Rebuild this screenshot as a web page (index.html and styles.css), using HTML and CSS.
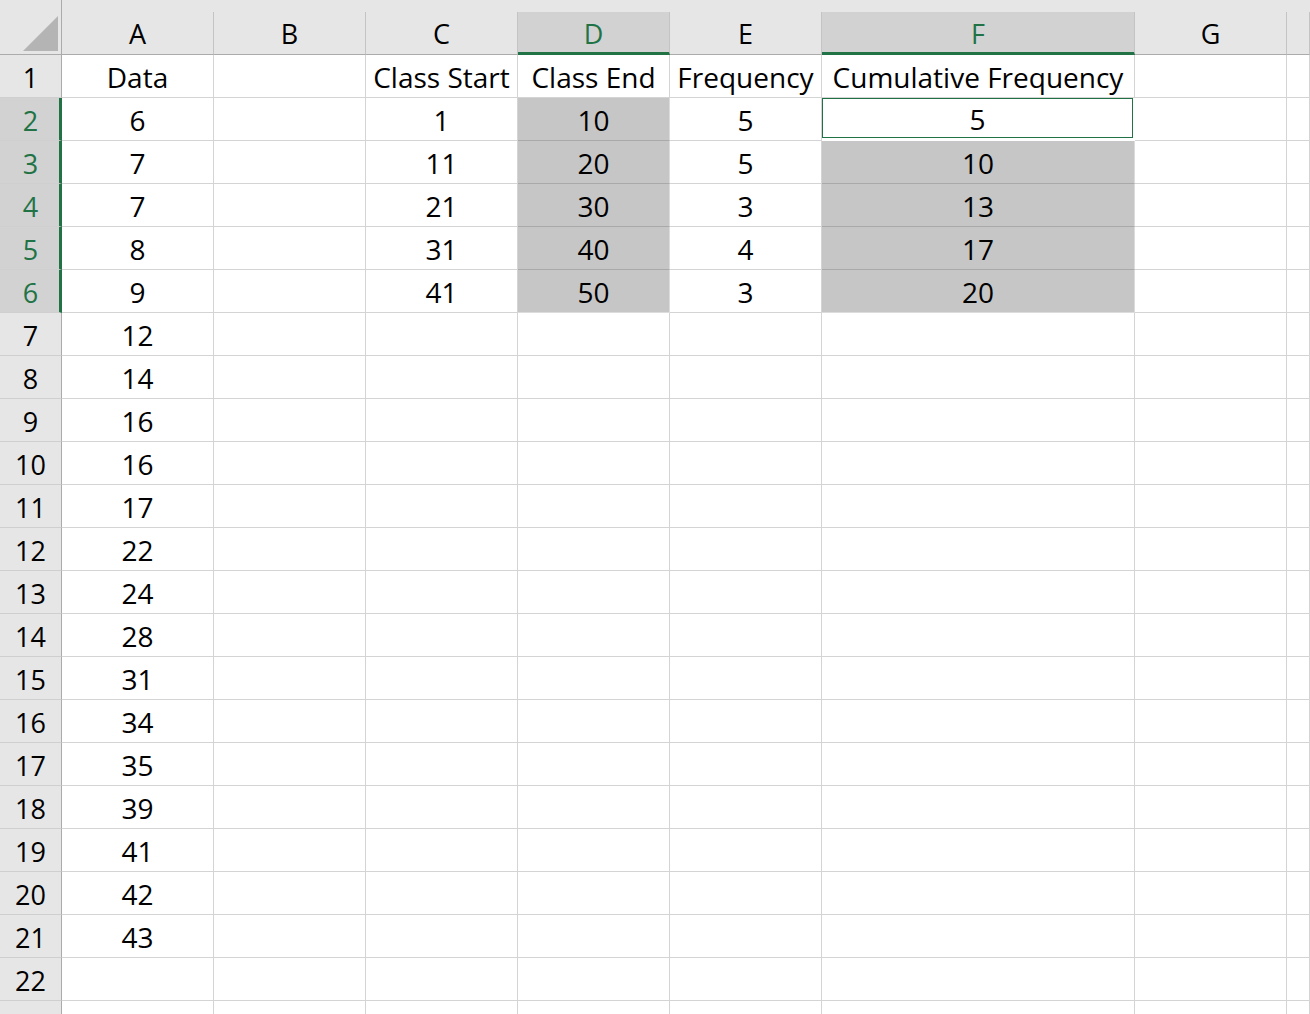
FILE: index.html
```html
<!DOCTYPE html>
<html lang="en">
<head>
    <meta charset="UTF-8">
    <meta name="viewport" content="width=device-width, initial-scale=1.0">
    <title>Cumulative Frequency</title>
    <link rel="stylesheet" href="styles.css">
</head>
<body>
    <div class="sheet">
        <div class="row head">
            <div class="corner"><span class="triangle"></span></div>
            <div class="col">A</div>
            <div class="col">B</div>
            <div class="col">C</div>
            <div class="col sel">D</div>
            <div class="col">E</div>
            <div class="col sel">F</div>
            <div class="col">G</div>
            <div class="col"></div>
        </div>
        <div id="rows"></div>
    </div>

    <script>
        const data = [6, 7, 7, 8, 9, 12, 14, 16, 16, 17, 22, 24, 28, 31, 34, 35, 39, 41, 42, 43];
        const tabela = [
            ["1", "10", "5", "5"],
            ["11", "20", "5", "10"],
            ["21", "30", "3", "13"],
            ["31", "40", "4", "17"],
            ["41", "50", "3", "20"]
        ];

        function celula(texto, classe) {
            const div = document.createElement("div");
            div.className = "cell" + (classe ? " " + classe : "");
            div.innerText = texto;
            return div;
        }

        const rows = document.getElementById("rows");
        for (let r = 1; r <= 23; r++) {
            const row = document.createElement("div");
            row.className = "row";
            const num = celula(r, "num");
            if (r >= 2 && r <= 6) num.classList.add("num-sel");
            row.appendChild(num);

            let a = "", c = "", d = "", e = "", f = "";
            if (r === 1) {
                a = "Data"; c = "Class Start"; d = "Class End"; e = "Frequency"; f = "Cumulative Frequency";
            } else {
                if (data[r - 2] !== undefined) a = data[r - 2];
                const t = tabela[r - 2];
                if (t) { c = t[0]; d = t[1]; e = t[2]; f = t[3]; }
            }
            const inSel = r >= 2 && r <= 6;
            row.appendChild(celula(a));
            row.appendChild(celula(""));
            row.appendChild(celula(c));
            row.appendChild(celula(d, inSel ? "shade" + (r === 6 ? " last" : "") : ""));
            row.appendChild(celula(e));
            let fClass = "";
            if (r === 2) fClass = "active";
            else if (inSel) fClass = "shade" + (r === 6 ? " last" : "");
            row.appendChild(celula(f, fClass));
            row.appendChild(celula(""));
            row.appendChild(celula(""));
            rows.appendChild(row);
        }
    </script>
</body>
</html>
```

FILE: styles.css
```css
* {
    margin: 0;
    padding: 0;
    box-sizing: border-box;
}
html, body {
    height: 100%;
    overflow: hidden;
    background: #ffffff;
}
body {
    font-family: "Open Sans", "Liberation Sans", sans-serif;
    color: #000000;
}
.sheet {
    width: 1310px;
}
.row {
    display: grid;
    grid-template-columns: 62px 152px 152px 152px 152px 152px 313px 152px 1fr;
    height: 43px;
}
.head {
    height: 55px;
    padding-top: 12px;
    background: #e6e6e6;
}
.corner {
    position: relative;
    margin-top: -12px;
    border-right: 1px solid #ababab;
    border-bottom: 1px solid #ababab;
}
.triangle {
    position: absolute;
    left: 23px;
    top: 16px;
    width: 0;
    height: 0;
    border-left: 35px solid transparent;
    border-bottom: 35px solid #b4b4b4;
}
.col {
    display: flex;
    align-items: center;
    justify-content: center;
    font-size: 27px;
    border-right: 1px solid #c4c4c4;
    border-bottom: 1px solid #ababab;
}
.col.sel {
    background: #d2d2d2;
    color: #217346;
    border-bottom: 3px solid #217346;
    padding-top: 2px;
}
.cell {
    display: flex;
    align-items: center;
    justify-content: center;
    padding-top: 2px;
    font-size: 28px;
    white-space: nowrap;
    border-right: 1px solid #d4d4d4;
    border-bottom: 1px solid #d4d4d4;
}
.num {
    background: #e6e6e6;
    font-size: 27px;
    border-right: 1px solid #ababab;
    border-bottom: 1px solid #cfcfcf;
}
.num-sel {
    background: #d2d2d2;
    color: #217346;
    padding-left: 2px;
    border-right: 3px solid #217346;
}
.shade {
    background: #c6c6c6;
    border-bottom: 1px solid #a9a9a9;
    border-right: 1px solid #dcdcdc;
}
.shade.last {
    border-bottom: 1px solid #dcdcdc;
}
.active {
    background: #ffffff;
    box-shadow: inset 0 0 0 1px #217346;
    border-right: 2px solid #ffffff;
    border-bottom: 3px solid #ffffff;
}
```
